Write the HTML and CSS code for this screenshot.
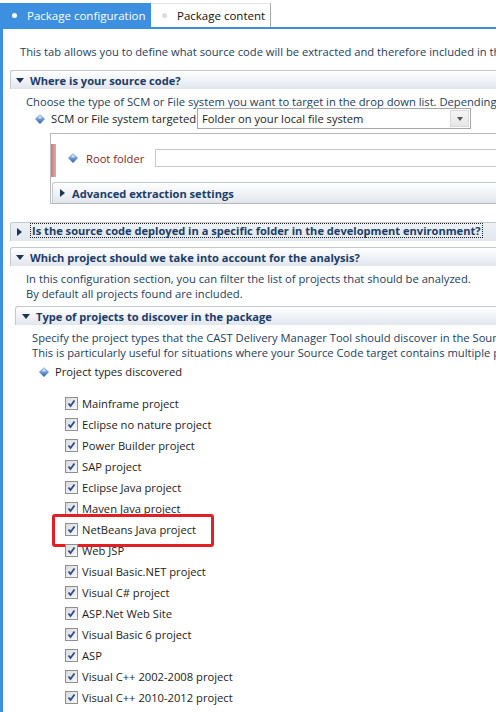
FILE: index.html
```html
<!DOCTYPE html>
<html lang="en">
<head>
    <meta charset="UTF-8">
    <title>Package configuration</title>
    <link rel="stylesheet" href="styles.css">
</head>
<body>
    <svg class="defs" width="0" height="0">
        <defs>
            <linearGradient id="dia" x1="0" y1="0" x2="0" y2="1">
                <stop offset="0" stop-color="#b9d3f0"/>
                <stop offset="0.5" stop-color="#6f9bd3"/>
                <stop offset="1" stop-color="#2f5f9f"/>
            </linearGradient>
        </defs>
    </svg>
    <div class="tabs">
        <div class="tab tab-active"><span class="dot"></span>Package configuration</div>
        <div class="tab tab-idle"><span class="dot"></span>Package content</div>
    </div>
    <div class="panel">
        <p class="intro">This tab allows you to define what source code will be extracted and therefore included in the package.</p>

        <div class="section first">
            <div class="head"><span class="tri-down"></span>Where is your source code?</div>
            <div class="body">
                <p>Choose the type of SCM or File system you want to target in the drop down list. Depending on your choice, different options are displayed.</p>
                <div class="field">
                    <svg class="diamond" width="10" height="10" viewBox="0 0 10 10"><path d="M5 0L10 5L5 10L0 5Z" fill="url(#dia)"/><path d="M5 1.5L7 4.2L5 4.8L3 4.2Z" fill="#fff" opacity=".6"/></svg>
                    <span class="label">SCM or File system targeted</span>
                    <div class="combo"><span class="combo-text">Folder on your local file system</span><span class="drop"><span class="arrow"></span></span></div>
                </div>
                <div class="nested">
                    <div class="root-row">
                        <span class="req"></span>
                        <div class="root-field">
                            <svg class="diamond" width="10" height="10" viewBox="0 0 10 10"><path d="M5 0L10 5L5 10L0 5Z" fill="url(#dia)"/><path d="M5 1.5L7 4.2L5 4.8L3 4.2Z" fill="#fff" opacity=".6"/></svg>
                            <span class="root-label">Root folder</span>
                            <input class="text-input" type="text">
                        </div>
                    </div>
                    <div class="head adv"><span class="tri-right"></span>Advanced extraction settings</div>
                </div>
            </div>
        </div>

        <div class="section deployed">
            <div class="head focused"><span class="tri-right"></span><span class="focus">Is the source code deployed in a specific folder in the development environment?</span></div>
        </div>

        <div class="section which">
            <div class="head"><span class="tri-down"></span>Which project should we take into account for the analysis?</div>
            <div class="body">
                <p>In this configuration section, you can filter the list of projects that should be analyzed.</p>
                <p class="tight">By default all projects found are included.</p>
                <div class="sub">
                    <div class="head sub-head"><span class="tri-down"></span>Type of projects to discover in the package</div>
                    <div class="sub-body">
                        <p>Specify the project types that the CAST Delivery Manager Tool should discover in the Source Code target.</p>
                        <p class="tight">This is particularly useful for situations where your Source Code target contains multiple project types.</p>
                        <div class="types">
                            <svg class="diamond" width="10" height="10" viewBox="0 0 10 10"><path d="M5 0L10 5L5 10L0 5Z" fill="url(#dia)"/><path d="M5 1.5L7 4.2L5 4.8L3 4.2Z" fill="#fff" opacity=".6"/></svg>
                            <span>Project types discovered</span>
                        </div>
                        <ul class="checks">
                            <li><span class="cb"><svg width="11" height="11" viewBox="0 0 11 11"><path d="M2.5 5.5L4.5 8L8.5 2.5" /></svg></span>Mainframe project</li>
                            <li><span class="cb"><svg width="11" height="11" viewBox="0 0 11 11"><path d="M2.5 5.5L4.5 8L8.5 2.5" /></svg></span>Eclipse no nature project</li>
                            <li><span class="cb"><svg width="11" height="11" viewBox="0 0 11 11"><path d="M2.5 5.5L4.5 8L8.5 2.5" /></svg></span>Power Builder project</li>
                            <li><span class="cb"><svg width="11" height="11" viewBox="0 0 11 11"><path d="M2.5 5.5L4.5 8L8.5 2.5" /></svg></span>SAP project</li>
                            <li><span class="cb"><svg width="11" height="11" viewBox="0 0 11 11"><path d="M2.5 5.5L4.5 8L8.5 2.5" /></svg></span>Eclipse Java project</li>
                            <li><span class="cb"><svg width="11" height="11" viewBox="0 0 11 11"><path d="M2.5 5.5L4.5 8L8.5 2.5" /></svg></span>Maven Java project</li>
                            <li class="marked"><span class="cb"><svg width="11" height="11" viewBox="0 0 11 11"><path d="M2.5 5.5L4.5 8L8.5 2.5" /></svg></span>NetBeans Java project</li>
                            <li><span class="cb"><svg width="11" height="11" viewBox="0 0 11 11"><path d="M2.5 5.5L4.5 8L8.5 2.5" /></svg></span>Web JSP</li>
                            <li><span class="cb"><svg width="11" height="11" viewBox="0 0 11 11"><path d="M2.5 5.5L4.5 8L8.5 2.5" /></svg></span>Visual Basic.NET project</li>
                            <li><span class="cb"><svg width="11" height="11" viewBox="0 0 11 11"><path d="M2.5 5.5L4.5 8L8.5 2.5" /></svg></span>Visual C# project</li>
                            <li><span class="cb"><svg width="11" height="11" viewBox="0 0 11 11"><path d="M2.5 5.5L4.5 8L8.5 2.5" /></svg></span>ASP.Net Web Site</li>
                            <li><span class="cb"><svg width="11" height="11" viewBox="0 0 11 11"><path d="M2.5 5.5L4.5 8L8.5 2.5" /></svg></span>Visual Basic 6 project</li>
                            <li><span class="cb"><svg width="11" height="11" viewBox="0 0 11 11"><path d="M2.5 5.5L4.5 8L8.5 2.5" /></svg></span>ASP</li>
                            <li><span class="cb"><svg width="11" height="11" viewBox="0 0 11 11"><path d="M2.5 5.5L4.5 8L8.5 2.5" /></svg></span>Visual C++ 2002-2008 project</li>
                            <li><span class="cb"><svg width="11" height="11" viewBox="0 0 11 11"><path d="M2.5 5.5L4.5 8L8.5 2.5" /></svg></span>Visual C++ 2010-2012 project</li>
                        </ul>
                    </div>
                </div>
            </div>
        </div>
    </div>
</body>
</html>
```
FILE: styles.css
```css
* {
    box-sizing: border-box;
}
body {
    margin: 0;
    width: 496px;
    height: 712px;
    overflow: hidden;
    background: #fff;
    color: #1c1c1c;
    font-family: "Open Sans", "Noto Sans", sans-serif;
    font-size: 11.2px;
}
p {
    margin: 0;
}
.defs {
    position: absolute;
}
.tabs {
    display: flex;
    gap: 1px;
    height: 27px;
}
.tab {
    display: flex;
    align-items: center;
    height: 24px;
    margin-top: 3px;
    font-size: 11.5px;
    white-space: nowrap;
}
.tab-active {
    width: 151px;
    padding-left: 12px;
    background: #3d8fe0;
    color: #fff;
}
.tab-idle {
    width: 119px;
    padding-left: 10px;
    border-top: 1px solid #e2e2e2;
    border-right: 1px solid #a9a9a9;
    color: #111;
}
.dot {
    width: 5px;
    height: 5px;
    margin-right: 10px;
    border-radius: 50%;
    background: #fff;
}
.tab-idle .dot {
    background: #dcdcdc;
}
.panel {
    width: 640px;
    height: 685px;
    padding: 15px 0 0 7px;
    border-top: 2px solid #3d8fe0;
    border-left: 3px solid #3d8fe0;
}
.intro {
    margin-left: 10px;
    line-height: 15px;
    color: #23405f;
    white-space: nowrap;
}
.section.first {
    margin-top: 11px;
}
.head {
    display: flex;
    align-items: center;
    height: 19px;
    padding-left: 5px;
    border-top: 1px solid #c3c9d1;
    border-left: 1px solid #c3c9d1;
    border-top-left-radius: 3px;
    background: linear-gradient(#ffffff, #e1e6ed);
    color: #1a3c68;
    font-size: 11.1px;
    font-weight: bold;
    white-space: nowrap;
}
.tri-down {
    width: 0;
    height: 0;
    margin-right: 6px;
    border-left: 4px solid transparent;
    border-right: 4px solid transparent;
    border-top: 5px solid #1c3553;
}
.tri-right {
    width: 0;
    height: 0;
    margin: 0 8px 0 1px;
    border-top: 4px solid transparent;
    border-bottom: 4px solid transparent;
    border-left: 5px solid #1c3553;
}
.body {
    padding-left: 6px;
}
.body > p {
    margin: 5px 0 0 10px;
    line-height: 15px;
    color: #23405f;
    white-space: nowrap;
}
.body > p.tight {
    margin-top: 0;
}
.field {
    display: flex;
    align-items: center;
    height: 21px;
    margin: -1px 0 0 19px;
}
.diamond {
    flex: none;
}
.label {
    width: 152px;
    padding-left: 6px;
    white-space: nowrap;
}
.combo {
    display: flex;
    width: 274px;
    height: 21px;
    border: 1px solid #a7a7a7;
}
.combo-text {
    flex: 1;
    padding-left: 4px;
    line-height: 19px;
    white-space: nowrap;
}
.drop {
    display: flex;
    align-items: center;
    justify-content: center;
    width: 19px;
    margin: 1px;
    border: 1px solid #dadada;
    background: linear-gradient(#f6f6f6, #e6e6e6);
}
.arrow {
    width: 0;
    height: 0;
    border-left: 3.5px solid transparent;
    border-right: 3.5px solid transparent;
    border-top: 4px solid #555;
}
.nested {
    height: 71px;
    margin: 4px 0 0 34px;
    border: 1px solid #b8b8b8;
}
.root-row {
    display: flex;
    align-items: flex-start;
    margin-top: 10px;
    height: 33px;
}
.req {
    flex: none;
    width: 5px;
    height: 33px;
    background: linear-gradient(to right, #c97c7c, #e4a7a7);
}
.root-field {
    display: flex;
    align-items: center;
    height: 18px;
    margin: 5px 0 0 12px;
}
.root-label {
    width: 77px;
    padding-left: 8px;
    color: #8b1f1f;
    white-space: nowrap;
}
.text-input {
    width: 420px;
    height: 18px;
    border: 1px solid #c9c9c9;
    outline: none;
}
.head.adv {
    height: 21px;
    margin: 5px 0 0 1px;
    padding-left: 7px;
}
.head.adv .tri-right {
    margin: 0 7px 0 0;
}
.section.deployed {
    margin-top: 18px;
}
.head.focused {
    align-items: flex-start;
    background: linear-gradient(#edf1f5, #e1e7ee);
}
.focus {
    height: 15px;
    padding: 0 1px 0 1px;
    border: 1px dotted #222;
    line-height: 13px;
}
.head.focused .tri-right {
    align-self: center;
}
.section.which {
    margin-top: 6px;
}
.sub {
    margin: 5px 0 0 -1px;
}
.sub-head {
    padding-left: 6px;
}
.sub-body p {
    margin: 5px 0 0 17px;
    line-height: 15px;
    color: #23405f;
    white-space: nowrap;
}
.sub-body p.tight {
    margin-top: 0;
}
.types {
    display: flex;
    align-items: center;
    height: 15px;
    margin: 4px 0 0 24px;
    gap: 6px;
}
.checks {
    margin: 14px 0 0 50px;
    padding: 0;
    list-style: none;
}
.checks li {
    position: relative;
    display: flex;
    align-items: center;
    height: 21px;
    white-space: nowrap;
}
.cb {
    display: flex;
    align-items: center;
    justify-content: center;
    width: 13px;
    height: 13px;
    margin-right: 4px;
    border: 1px solid #8e8f90;
    background: linear-gradient(135deg, #d9dbde, #f8f8f8);
}
.cb path {
    fill: none;
    stroke: #2d4a8a;
    stroke-width: 1.8;
}
.checks li.marked::after {
    content: "";
    position: absolute;
    left: -13px;
    top: -5px;
    width: 156px;
    height: 27px;
    border: 3px solid #e31e24;
    border-radius: 3px;
}
```
